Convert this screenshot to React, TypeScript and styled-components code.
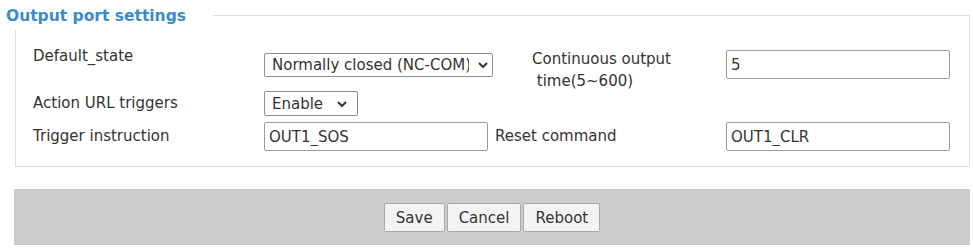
import React from "react";
import styled, { createGlobalStyle } from "styled-components";

const GlobalStyle = createGlobalStyle`
  html, body {
    margin: 0;
    padding: 0;
    background: #ffffff;
  }
  body {
    font-family: "DejaVu Sans", Verdana, sans-serif;
    font-size: 15px;
    color: #333333;
  }
`;

const Page = styled.div`
  width: 970px;
`;

const Header = styled.div`
  display: flex;
  height: 30px;
`;

const Title = styled.div`
  box-sizing: border-box;
  width: 213px;
  padding: 7px 0 0 6px;
  font-size: 15.5px;
  line-height: 18px;
  font-weight: bold;
  color: #3b8bcb;
  white-space: nowrap;
`;

const Rule = styled.div`
  flex: 1;
  margin-top: 15px;
  border-top: 1px solid #dddddd;
  border-right: 1px solid #dddddd;
`;

const Box = styled.div`
  margin-left: 15px;
  height: 137px;
  box-sizing: border-box;
  border: 1px solid #dddddd;
  border-top: none;
  padding-top: 17px;
`;

const Grid = styled.div`
  display: grid;
  grid-template-columns: 248px 231px 231px 1fr;
  grid-template-rows: 42px 31px 32px;
  align-items: start;
`;

const Cell = styled.div<{ $pt?: number; $pl?: number }>`
  padding-top: ${({ $pt }) => $pt ?? 0}px;
  padding-left: ${({ $pl }) => $pl ?? 0}px;
  line-height: 18px;
  white-space: nowrap;
`;

const TwoLine = styled.div`
  line-height: 22px;
`;

const TextInput = styled.input`
  box-sizing: border-box;
  width: 224px;
  height: 29px;
  border: 1px solid #9a9a9a;
  border-radius: 2px;
  padding: 0 4px;
  font-family: inherit;
  font-size: 15px;
  color: #333333;
  background: #ffffff;
  outline: none;
`;

const SelectWrap = styled.div<{ $w: number; $h: number }>`
  position: relative;
  width: ${({ $w }) => $w}px;
  height: ${({ $h }) => $h}px;
`;

const Select = styled.select`
  appearance: none;
  box-sizing: border-box;
  width: 100%;
  height: 100%;
  border: 1px solid #8f8f8f;
  border-radius: 2px;
  padding: 0 23px 0 7px;
  font-family: inherit;
  font-size: 15px;
  color: #333333;
  background: #ffffff;
  outline: none;
  overflow: hidden;
`;

const Arrow = styled.svg<{ $right: number }>`
  position: absolute;
  right: ${({ $right }) => $right}px;
  top: 50%;
  margin-top: -3px;
  pointer-events: none;
`;

const Bar = styled.div`
  margin: 22px 0 0 14px;
  height: 56px;
  box-sizing: border-box;
  background: #cccccc;
  border-bottom: 1px solid #bdbdbd;
  display: flex;
  justify-content: center;
  gap: 2px;
  padding-top: 14px;
`;

const Button = styled.button`
  height: 29px;
  padding: 0 11px;
  border: 1px solid #a8a8a8;
  border-radius: 2px;
  background: #f3f3f3;
  font-family: inherit;
  font-size: 15px;
  color: #333333;
`;

const Chevron: React.FC<{ right: number }> = ({ right }) => (
  <Arrow $right={right} width="10" height="6" viewBox="0 0 10 6">
    <path d="M1 1 L5 5 L9 1" fill="none" stroke="#333" strokeWidth="2" />
  </Arrow>
);

const App: React.FC = () => {
  return (
    <Page>
      <GlobalStyle />
      <Header>
        <Title>Output port settings</Title>
        <Rule />
      </Header>
      <Box>
        <Grid>
          <Cell $pl={17}>Default_state</Cell>
          <Cell $pt={6}>
            <SelectWrap $w={229} $h={24}>
              <Select defaultValue="nc">
                <option value="nc">Normally closed (NC-COM)</option>
                <option value="no">Normally open (NO-COM)</option>
              </Select>
              <Chevron right={5} />
            </SelectWrap>
          </Cell>
          <Cell $pt={1} $pl={37}>
            <TwoLine>
              Continuous output
              <br />
              &nbsp;time(5~600)
            </TwoLine>
          </Cell>
          <Cell $pt={3}>
            <TextInput defaultValue="5" />
          </Cell>

          <Cell $pt={5} $pl={17}>Action URL triggers</Cell>
          <Cell $pt={2}>
            <SelectWrap $w={94} $h={25}>
              <Select defaultValue="enable">
                <option value="enable">Enable</option>
                <option value="disable">Disable</option>
              </Select>
              <Chevron right={11} />
            </SelectWrap>
          </Cell>
          <Cell />
          <Cell />

          <Cell $pt={7} $pl={17}>Trigger instruction</Cell>
          <Cell $pt={2}>
            <TextInput defaultValue="OUT1_SOS" />
          </Cell>
          <Cell $pt={7}>Reset command</Cell>
          <Cell $pt={2}>
            <TextInput defaultValue="OUT1_CLR" />
          </Cell>
        </Grid>
      </Box>
      <Bar>
        <Button>Save</Button>
        <Button>Cancel</Button>
        <Button>Reboot</Button>
      </Bar>
    </Page>
  );
};

export default App;
